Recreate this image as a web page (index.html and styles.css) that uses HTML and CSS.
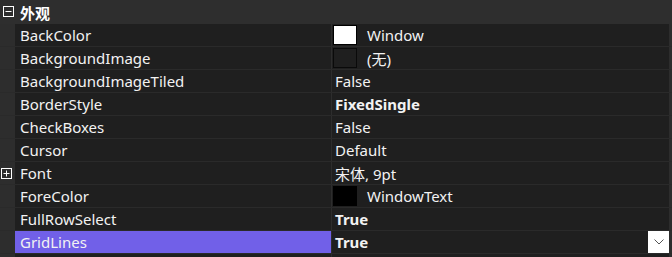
FILE: index.html
```html
<!DOCTYPE html>
<html lang="zh-CN">
<head>
    <meta charset="UTF-8">
    <title>属性 - 外观</title>
    <link rel="stylesheet" href="styles.css">
</head>
<body>
    <div class="grid">
        <div class="category">
            <span class="toggle">
                <svg width="11" height="11" viewBox="0 0 11 11"><rect x="0.5" y="0.5" width="10" height="10" fill="none" stroke="#fff"/><path d="M2.5 5.5h6" stroke="#fff"/></svg>
            </span>
            <span class="category-name">外观</span>
        </div>

        <div class="row">
            <span class="gutter"></span>
            <span class="name">BackColor</span>
            <span class="value"><span class="swatch white"></span>Window</span>
        </div>
        <div class="row">
            <span class="gutter"></span>
            <span class="name">BackgroundImage</span>
            <span class="value"><span class="swatch empty"></span>(无)</span>
        </div>
        <div class="row">
            <span class="gutter"></span>
            <span class="name">BackgroundImageTiled</span>
            <span class="value">False</span>
        </div>
        <div class="row">
            <span class="gutter"></span>
            <span class="name">BorderStyle</span>
            <span class="value bold">FixedSingle</span>
        </div>
        <div class="row">
            <span class="gutter"></span>
            <span class="name">CheckBoxes</span>
            <span class="value">False</span>
        </div>
        <div class="row">
            <span class="gutter"></span>
            <span class="name">Cursor</span>
            <span class="value">Default</span>
        </div>
        <div class="row">
            <span class="gutter">
                <svg width="11" height="11" viewBox="0 0 11 11"><rect x="0.5" y="0.5" width="10" height="10" fill="none" stroke="#fff"/><path d="M2.5 5.5h6M5.5 2.5v6" stroke="#fff"/></svg>
            </span>
            <span class="name">Font</span>
            <span class="value">宋体, 9pt</span>
        </div>
        <div class="row">
            <span class="gutter"></span>
            <span class="name">ForeColor</span>
            <span class="value"><span class="swatch black"></span>WindowText</span>
        </div>
        <div class="row">
            <span class="gutter"></span>
            <span class="name">FullRowSelect</span>
            <span class="value bold">True</span>
        </div>
        <div class="row selected">
            <span class="gutter"></span>
            <span class="name">GridLines</span>
            <span class="value bold">True
                <span class="dropdown">
                    <svg width="10" height="6" viewBox="0 0 10 6"><path d="M0.5 0.5l4.5 4.5l4.5-4.5" fill="none" stroke="#555"/></svg>
                </span>
            </span>
        </div>
        <div class="row">
            <span class="gutter"></span>
            <span class="name"></span>
            <span class="value"></span>
        </div>
    </div>
</body>
</html>
```

FILE: styles.css
```css
/* Property grid, dark theme */
body {
    margin: 0;
    background: #2d2d2d;
    font-family: "Noto Sans", "Noto Sans CJK SC", sans-serif;
    font-size: 15px;
    color: #f2f2f2;
    overflow: hidden;
}

.grid {
    width: 672px;
    height: 257px;
    overflow: hidden;
}

.category {
    height: 24px;
    display: flex;
    align-items: center;
    background: #2e2e2e;
}

.toggle {
    width: 15px;
    display: flex;
    justify-content: center;
    padding-left: 1px;
    margin-top: -1px;
}

.toggle svg,
.gutter svg {
    display: block;
}

.category-name {
    margin-left: 4px;
    font-weight: bold;
    color: #fff;
}

.row {
    display: flex;
    height: 22px;
    border-bottom: 1px solid #2a2a2a;
    padding-right: 3px;
}

.gutter {
    width: 15px;
    flex: none;
    display: flex;
    align-items: center;
    justify-content: center;
    padding-right: 2px;
    box-sizing: border-box;
    background: #2d2d2d;
}

.name {
    width: 317px;
    flex: none;
    padding-left: 5px;
    box-sizing: border-box;
    line-height: 22px;
    background: #1f1f1f;
    border-right: 1px solid #2d2d2d;
    white-space: nowrap;
}

.value {
    flex: 1;
    display: flex;
    align-items: center;
    padding-left: 3px;
    background: #1f1f1f;
    white-space: nowrap;
}

.bold {
    font-weight: bold;
}

.swatch {
    width: 22px;
    height: 18px;
    margin-left: -2px;
    margin-right: 10px;
    border: 1px solid #000;
}

.swatch.white {
    background: #fff;
}

.swatch.empty {
    background: #1f1f1f;
    border-color: #0a0a0a;
}

.swatch.black {
    background: #000;
}

.selected .name {
    background: #7160e8;
}

.dropdown {
    margin-left: auto;
    width: 21px;
    height: 22px;
    background: #fff;
    display: flex;
    align-items: center;
    justify-content: center;
}
```
